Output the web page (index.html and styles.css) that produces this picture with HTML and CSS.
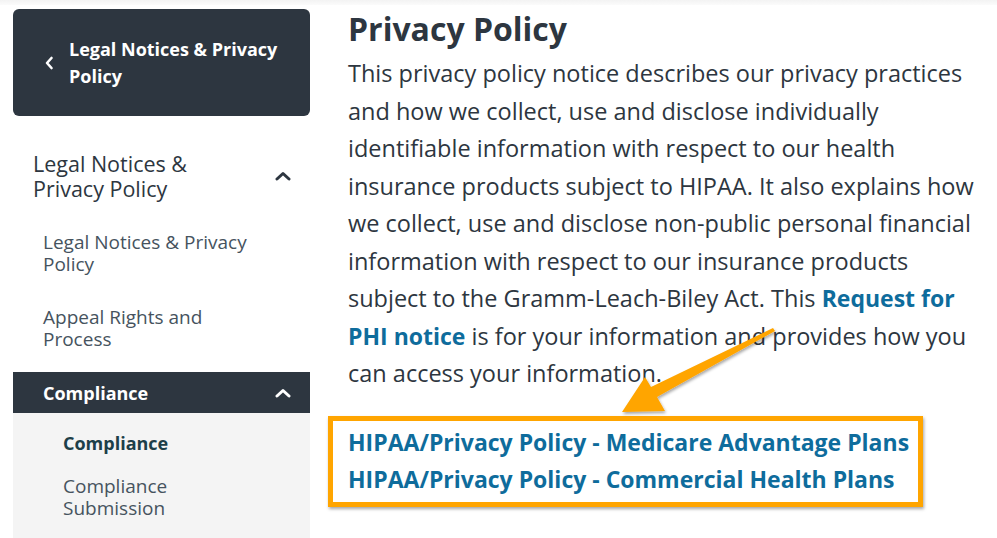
FILE: index.html
```html
<!DOCTYPE html>
<html>
<head>
<meta charset="utf-8">
<link rel="stylesheet" href="styles.css">
</head>
<body>
<div class="topstrip"></div>
<div class="page">
  <aside class="sidebar">
    <div class="backbox">
      <svg class="back-chev" width="10" height="14" viewBox="0 0 10 14"><path d="M7.5 2 L3 7 L7.5 12" fill="none" stroke="#fff" stroke-width="2.6" stroke-linecap="round" stroke-linejoin="round"/></svg>
      <span class="backtext">Legal Notices &amp; Privacy Policy</span>
    </div>
    <div class="group">
      <div class="group-head">
        <span>Legal Notices &amp;<br>Privacy Policy</span>
        <svg class="up-chev" width="16" height="10" viewBox="0 0 16 10"><path d="M2 8 L8 2.5 L14 8" fill="none" stroke="#2d3640" stroke-width="3" stroke-linecap="round" stroke-linejoin="round"/></svg>
      </div>
      <div class="sub-item">Legal Notices &amp; Privacy<br>Policy</div>
      <div class="sub-item">Appeal Rights and<br>Process</div>
    </div>
    <div class="active-head">
      <span>Compliance</span>
      <svg class="up-chev" width="16" height="10" viewBox="0 0 16 10"><path d="M2 8 L8 2.5 L14 8" fill="none" stroke="#fff" stroke-width="3" stroke-linecap="round" stroke-linejoin="round"/></svg>
    </div>
    <div class="active-panel">
      <div class="panel-item current">Compliance</div>
      <div class="panel-item">Compliance<br>Submission</div>
    </div>
  </aside>
  <main class="content">
    <h1 class="title">Privacy Policy</h1>
    <p class="body">This privacy policy notice describes our privacy practices and how we collect, use and disclose individually identifiable information with respect to our health insurance products subject to HIPAA. It also explains how we collect, use and disclose non-public personal financial information with respect to our insurance products subject to the Gramm-Leach-Biley Act. This <a class="link">Request for PHI notice</a> is for your information and provides how you can access your information.</p>
    <div class="linkbox">
      <a class="link">HIPAA/Privacy Policy - Medicare Advantage Plans</a>
      <a class="link">HIPAA/Privacy Policy - Commercial Health Plans</a>
      <svg class="arrow" width="160" height="100" viewBox="0 0 160 100">
        <defs>
          <filter id="sh" x="-20%" y="-20%" width="140%" height="140%">
            <feDropShadow dx="1" dy="2" stdDeviation="1.5" flood-color="#000" flood-opacity="0.35"/>
          </filter>
        </defs>
        <path d="M153 3 L31 62 L25 52 L2 87 L45 86 L37 72 L155 6 Z" fill="#FFA500" filter="url(#sh)"/>
      </svg>
    </div>
  </main>
</div>
</body>
</html>
```
FILE: styles.css
```css
* { box-sizing: border-box; }
html, body { margin: 0; padding: 0; background: #fff; }
body {
  font-family: "Open Sans", "Lato", sans-serif;
  color: #2d3640;
  width: 997px;
  height: 538px;
  overflow: hidden;
}
.topstrip {
  height: 5px;
  background: linear-gradient(#f3f3f3, #fbfbfb);
}
.page {
  display: flex;
  padding-left: 13px;
}
.sidebar {
  width: 297px;
  flex: none;
  padding-top: 4px;
}
.backbox {
  background: #2d3640;
  border-radius: 6px;
  height: 107px;
  display: flex;
  align-items: center;
  padding-left: 31px;
  padding-right: 20px;
  gap: 15px;
}
.back-chev { flex: none; }
.backtext {
  color: #fff;
  font-weight: 700;
  font-size: 18px;
  line-height: 27px;
}
.group { padding-top: 35px; }
.group-head {
  display: flex;
  align-items: center;
  justify-content: space-between;
  padding-left: 20px;
  padding-right: 19px;
  font-size: 21.5px;
  line-height: 25px;
  color: #2d3640;
}
.sub-item {
  padding-left: 30px;
  font-size: 19px;
  line-height: 22px;
  color: #46535e;
  margin-top: 30px;
}
.sub-item + .sub-item { margin-top: 31px; }
.active-head {
  margin-top: 22px;
  background: #2d3640;
  height: 41px;
  display: flex;
  align-items: center;
  justify-content: space-between;
  padding-left: 30px;
  padding-right: 19px;
  color: #fff;
  font-weight: 700;
  font-size: 18px;
}
.active-panel {
  background: #f4f4f4;
  padding-top: 19px;
  padding-bottom: 20px;
  padding-left: 50px;
}
.panel-item {
  font-size: 19px;
  line-height: 22px;
  color: #46535e;
}
.panel-item.current {
  font-weight: 700;
  font-size: 18px;
  color: #1d3f49;
  margin-bottom: 21px;
}
.content {
  padding-left: 38px;
  width: 680px;
}
.title {
  margin: 6px 0 0 0;
  font-size: 32px;
  line-height: 36px;
  font-weight: 700;
  color: #2d3640;
}
.body {
  margin: 8px 0 0 0;
  width: 640px;
  font-size: 23.5px;
  line-height: 37.5px;
  color: #2d3640;
}
.link {
  color: #0e6c9c;
  font-weight: 700;
  font-size: 23px;
  text-decoration: none;
}
.body .link { line-height: 1; }
.linkbox {
  position: relative;
  margin-top: 23px;
  margin-left: -20px;
  width: 595px;
  border: 5px solid #FFA500;
  box-shadow: 1px 2px 3px rgba(0,0,0,0.35);
  padding: 3px 0 4px 15px;
  display: flex;
  flex-direction: column;
}
.linkbox .link {
  font-size: 23px;
  line-height: 37px;
}
.arrow {
  position: absolute;
  left: 287px;
  top: -96px;
  pointer-events: none;
}
```
